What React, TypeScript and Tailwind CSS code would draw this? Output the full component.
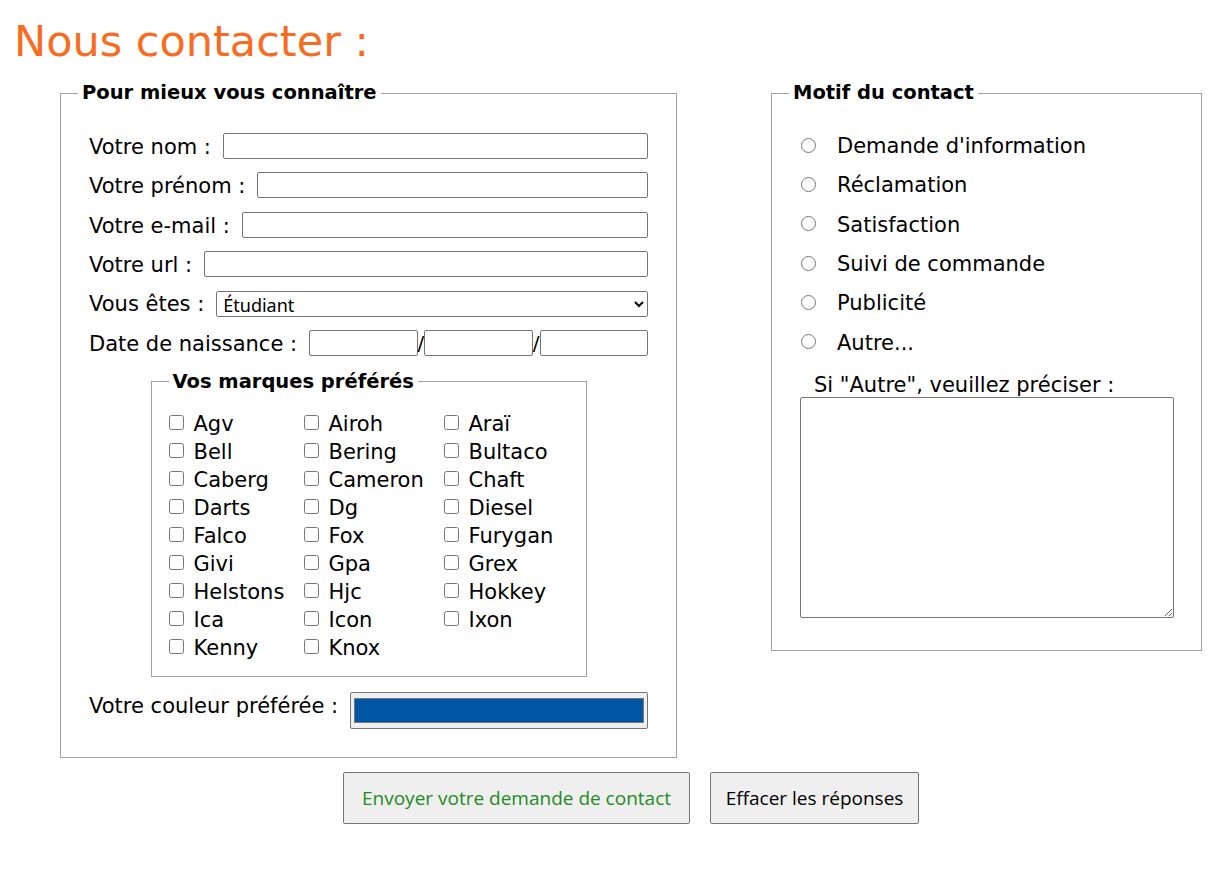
import React from 'react';

const BRANDS = [
  'Agv', 'Airoh', 'Araï',
  'Bell', 'Bering', 'Bultaco',
  'Caberg', 'Cameron', 'Chaft',
  'Darts', 'Dg', 'Diesel',
  'Falco', 'Fox', 'Furygan',
  'Givi', 'Gpa', 'Grex',
  'Helstons', 'Hjc', 'Hokkey',
  'Ica', 'Icon', 'Ixon',
  'Kenny', 'Knox',
];

const MOTIFS = [
  'Demande d\'information',
  'Réclamation',
  'Satisfaction',
  'Suivi de commande',
  'Publicité',
  'Autre...',
];

const inputCls = 'h-[26px] w-0 min-w-0 flex-1 border border-[#767676] rounded-[2px] bg-white px-1 text-[16px]';

const TextRow: React.FC<{ label: string; type?: string }> = ({ label, type = 'text' }) => (
  <div className="flex items-center gap-[12px] h-[26px]">
    <label className="whitespace-nowrap pt-[3px]">{label}</label>
    <input type={type} className={inputCls} />
  </div>
);

export default function App() {
  return (
    <div className="min-h-screen bg-white text-black font-['DejaVu_Sans',sans-serif] text-[21px]">
      {/* Title */}
      <h1 className="pl-[14px] pt-[19px] text-[43px] leading-[44px] text-[#f96b1e]">Nous contacter :</h1>

      <form className="ml-[60px] mt-[16px] w-[1142px]">
        <div className="flex items-start justify-between">
          {/* Left block */}
          <fieldset className="w-[617px] min-w-0 shrink-0 border border-[#a0a0a0] pl-[17px] pr-[28px] pb-[28px]">
            <legend className="px-[4px] text-[19.5px] font-semibold leading-[28px]">Pour mieux vous connaître</legend>
            <div className="pl-[11px] pt-[26px]">
              <div className="flex flex-col gap-[13.4px]">
                <TextRow label="Votre nom :" />
                <TextRow label="Votre prénom :" />
                <TextRow label="Votre e-mail :" type="email" />
                <TextRow label="Votre url :" type="url" />
                <div className="flex items-center gap-[12px] h-[26px]">
                  <label className="whitespace-nowrap pt-[3px]">Vous êtes :</label>
                  <select className="w-0 min-w-0 flex-1 h-[26px] border border-[#767676] rounded-[2px] bg-white pl-[2px] text-[18px] font-['Noto_Sans',sans-serif]">
                    <option>Étudiant</option>
                    <option>Salarié</option>
                    <option>Retraité</option>
                  </select>
                </div>
                <div className="flex items-center h-[26px]">
                  <label className="whitespace-nowrap mr-[12px] pt-[3px]">Date de naissance :</label>
                  <input type="text" className={inputCls} />
                  <span className="text-[20px] leading-none">/</span>
                  <input type="text" className={inputCls} />
                  <span className="text-[20px] leading-none">/</span>
                  <input type="text" className={inputCls} />
                </div>
              </div>

              {/* Brands */}
              <fieldset className="mx-auto mt-[12px] w-[436px] min-w-0 border border-[#a0a0a0] pl-[17px] pb-[15px]">
                <legend className="px-[4px] text-[19.5px] font-semibold leading-[28px]">Vos marques préférés</legend>
                <div className="grid grid-cols-[135px_140px_1fr] pt-[13px]">
                  {BRANDS.map((b) => (
                    <label key={b} className="flex items-center gap-[10px] h-[28px] leading-[28px]">
                      <input type="checkbox" className="w-[15px] h-[15px]" />
                      <span className="pt-[2px]">{b}</span>
                    </label>
                  ))}
                </div>
              </fieldset>

              <div className="flex items-center gap-[12px] mt-[15px]">
                <label className="whitespace-nowrap -mt-[8px]">Votre couleur préférée :</label>
                <div className="w-0 flex-1 h-[37px] border border-[#767676] rounded-[2px] bg-[#efefef] px-[3px] py-[5px]">
                  <div className="h-full border border-[#777] bg-[#0055a5]" />
                </div>
              </div>
            </div>
          </fieldset>

          {/* Right block */}
          <fieldset className="w-[431px] min-w-0 shrink-0 border border-[#a0a0a0] pl-[17px] pr-[27px] pb-[32px]">
            <legend className="px-[4px] text-[19.5px] font-semibold leading-[28px]">Motif du contact</legend>
            <div className="flex flex-col gap-[13.4px] pt-[25px] pl-[12px]">
              {MOTIFS.map((m) => (
                <label key={m} className="flex items-center gap-[21px] h-[26px]">
                  <input type="radio" name="motif" className="w-[15px] h-[15px]" />
                  <span className="pt-[3px]">{m}</span>
                </label>
              ))}
            </div>
            <div className="pl-[25px] mt-[14px] pt-[2px] leading-[28px]">Si "Autre", veuillez préciser :</div>
            <div className="pl-[11px] -mt-[2px]">
              <textarea className="block w-[374px] h-[221px] border border-[#767676] rounded-[2px] bg-white" />
            </div>
          </fieldset>
        </div>

        {/* Buttons */}
        <div className="flex justify-center gap-[20px] mt-[14px] font-['Open_Sans',sans-serif] text-[19px]">
          <button type="submit" className="w-[347px] h-[52px] border border-[#767676] rounded-[2px] bg-[#efefef] text-[#228b22]">
            Envoyer votre demande de contact
          </button>
          <button type="reset" className="w-[209px] h-[52px] border border-[#767676] rounded-[2px] bg-[#efefef] text-black">
            Effacer les réponses
          </button>
        </div>
      </form>
    </div>
  );
}
